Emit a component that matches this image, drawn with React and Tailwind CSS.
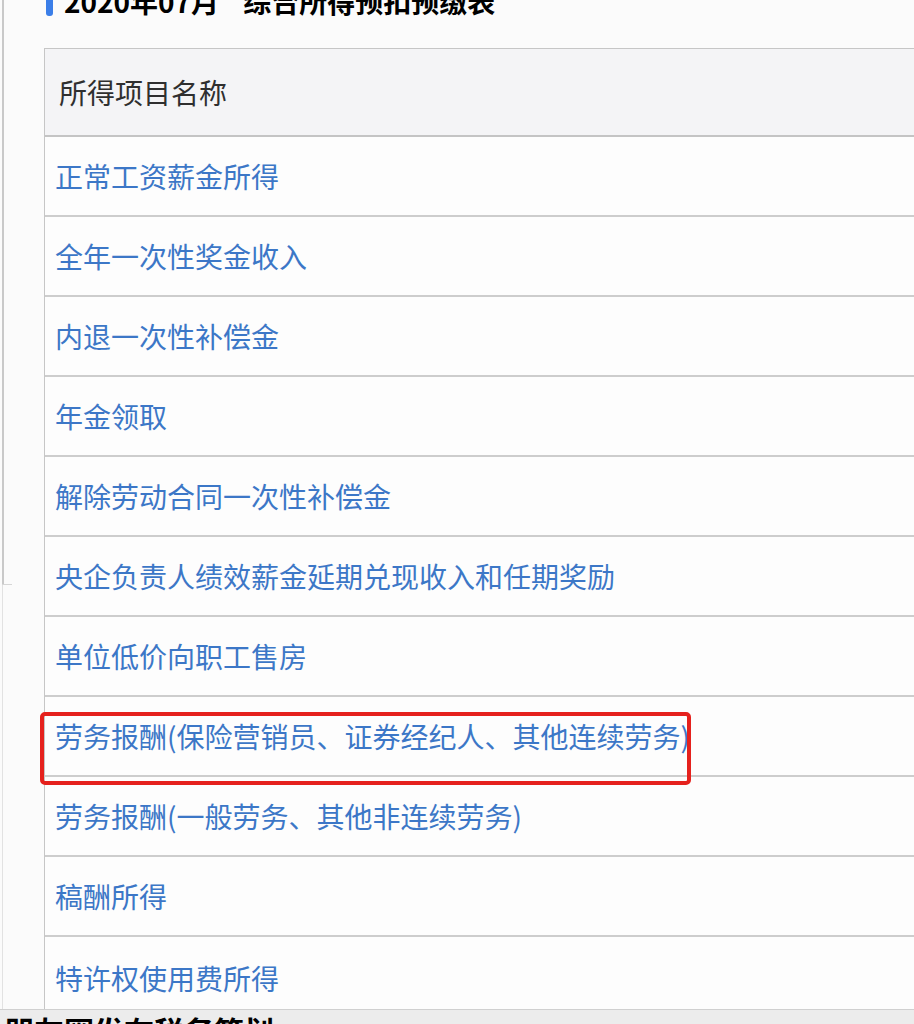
import React from "react";

const rows = [
  "正常工资薪金所得",
  "全年一次性奖金收入",
  "内退一次性补偿金",
  "年金领取",
  "解除劳动合同一次性补偿金",
  "央企负责人绩效薪金延期兑现收入和任期奖励",
  "单位低价向职工售房",
  "劳务报酬(保险营销员、证券经纪人、其他连续劳务)",
  "劳务报酬(一般劳务、其他非连续劳务)",
  "稿酬所得",
  "特许权使用费所得",
];

const font = { fontFamily: '"Noto Sans CJK SC", "Noto Sans", sans-serif' };

const App = () => {
  return (
    <div
      className="relative w-[914px] h-[1024px] overflow-hidden bg-[#fbfbfb] flex flex-col"
      style={font}
    >
      <div className="flex flex-1">
        {/* left edge of the page behind */}
        <div className="w-[44px] shrink-0 flex flex-col">
          <div className="ml-[2px] w-[2px] h-[584px] bg-[#c9c9c9]" />
          <div className="ml-[2px] w-[10px] h-[1px] bg-[#d6d6d6]" />
          <div className="ml-[2px] w-[1px] flex-1 bg-[#e2e2e2]" />
        </div>

        <div className="flex-1 flex flex-col">
          {/* title, top cut off */}
          <div className="h-[48px] overflow-hidden">
            <div className="flex items-center gap-[11px] mt-[-17px] ml-[2px]">
              <div className="w-[7px] h-[30px] rounded-[3px] bg-[#3b7ee8]" />
              <div className="flex items-center gap-[24px] text-[28px] leading-[36px] font-bold text-black whitespace-nowrap">
                <span>2020年07月</span>
                <span>综合所得预扣预缴表</span>
              </div>
            </div>
          </div>

          {/* table */}
          <div className="border-l border-t border-[#c6c6c6] bg-[#fdfdfd] flex-1 flex flex-col">
            <div className="h-[88px] shrink-0 flex items-center pl-[14px] bg-[#f4f4f6] border-b-2 border-[#c4c4c4] text-[28px] text-[#2f2f2f]">
              所得项目名称
            </div>
            {rows.map((r, i) => (
              <div
                key={r}
                className={
                  i === rows.length - 1
                    ? "h-[72px] shrink-0 flex items-center pt-[10px] pl-[10px] text-[28px] text-[#3c77c7] whitespace-nowrap"
                    : "h-[80px] shrink-0 flex items-center pl-[10px] border-b-2 border-[#cdcdcd] text-[28px] text-[#3c77c7] whitespace-nowrap"
                }
              >
                {r}
              </div>
            ))}
          </div>
        </div>
      </div>

      {/* next section, mostly out of view */}
      <div className="h-[16px] shrink-0 bg-[#ececec] border-t border-[#d0d0d0] overflow-hidden">
        <div className="pl-[4px] pt-[5px] text-[30px] leading-[30px] font-bold text-black whitespace-nowrap">
          朋友圈发布税务筹划
        </div>
      </div>

      {/* red annotation box */}
      <div className="absolute left-[40px] top-[712px] w-[651px] h-[73px] border-4 border-[#e5211d] rounded-[5px]" />
    </div>
  );
};

export default App;
